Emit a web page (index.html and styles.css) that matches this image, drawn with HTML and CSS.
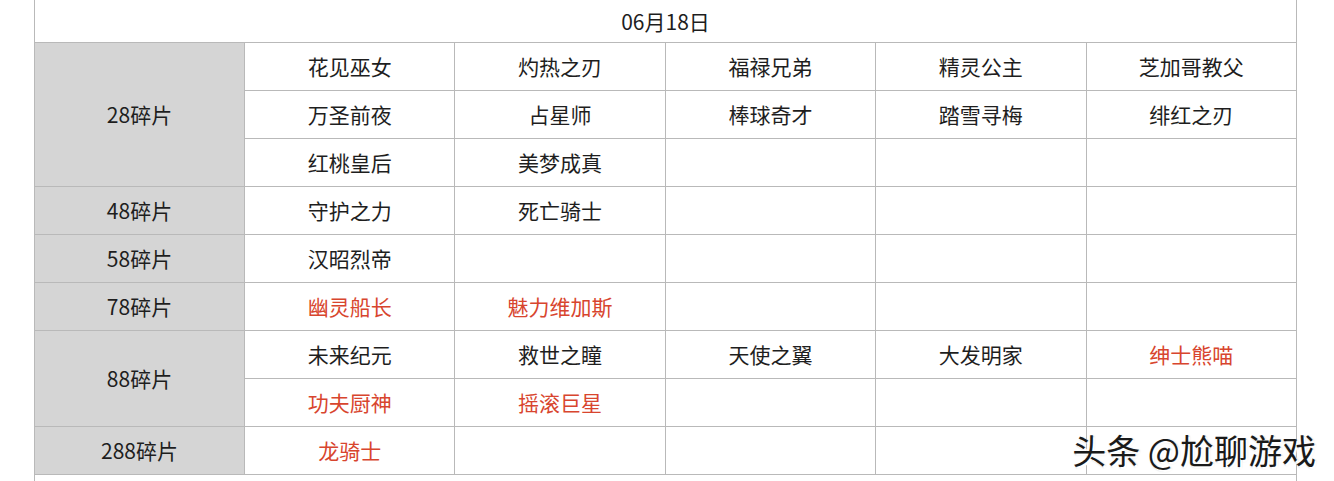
FILE: index.html
```html
<!DOCTYPE html>
<html lang="zh">
<head>
<meta charset="utf-8">
<link rel="stylesheet" href="styles.css">
</head>
<body>
<div class="page">
<table class="grid">
<colgroup><col class="c0"><col><col><col><col><col></colgroup>
<tr class="head"><td colspan="6">06月18日</td></tr>
<tr><td class="lab" rowspan="3">28碎片</td><td>花见巫女</td><td>灼热之刃</td><td>福禄兄弟</td><td>精灵公主</td><td>芝加哥教父</td></tr>
<tr><td>万圣前夜</td><td>占星师</td><td>棒球奇才</td><td>踏雪寻梅</td><td>绯红之刃</td></tr>
<tr><td>红桃皇后</td><td>美梦成真</td><td></td><td></td><td></td></tr>
<tr><td class="lab">48碎片</td><td>守护之力</td><td>死亡骑士</td><td></td><td></td><td></td></tr>
<tr><td class="lab">58碎片</td><td>汉昭烈帝</td><td></td><td></td><td></td><td></td></tr>
<tr><td class="lab">78碎片</td><td class="red">幽灵船长</td><td class="red">魅力维加斯</td><td></td><td></td><td></td></tr>
<tr><td class="lab" rowspan="2">88碎片</td><td>未来纪元</td><td>救世之瞳</td><td>天使之翼</td><td>大发明家</td><td class="red">绅士熊喵</td></tr>
<tr><td class="red">功夫厨神</td><td class="red">摇滚巨星</td><td></td><td></td><td></td></tr>
<tr><td class="lab">288碎片</td><td class="red">龙骑士</td><td></td><td></td><td></td><td></td></tr>
<tr><td colspan="6"></td></tr>
</table>
<div class="mark">头条 @尬聊游戏</div>
</div>
</body>
</html>
```
FILE: styles.css
```css
html, body {
  margin: 0;
  padding: 0;
  background: #fff;
  overflow: hidden;
}
.page {
  position: relative;
  width: 1334px;
  height: 481px;
  overflow: hidden;
  padding-left: 34px;
  box-sizing: border-box;
  font-family: "Noto Sans CJK SC", "Noto Sans", sans-serif;
  font-size: 21px;
  color: #1e1e1e;
}
.grid {
  border-collapse: collapse;
  table-layout: fixed;
  width: 1263px;
}
.grid col.c0 {
  width: 210px;
}
.grid td {
  border: 1px solid #b9b9b9;
  height: 47px;
  padding: 0;
  text-align: center;
  vertical-align: middle;
  line-height: 1;
}
.grid tr.head td {
  height: 42px;
  border-top: none;
}
.grid td.lab {
  background: #d5d5d5;
}
.grid td.red {
  color: #d8452e;
}
.mark {
  position: absolute;
  right: 18px;
  top: 431px;
  font-size: 34px;
  line-height: 38px;
  color: #1a1a1a;
  text-shadow: 2px 2px 0 #fff, -1px -1px 0 rgba(255,255,255,0.8), 1px 1px 2px rgba(0,0,0,0.3);
}
```
